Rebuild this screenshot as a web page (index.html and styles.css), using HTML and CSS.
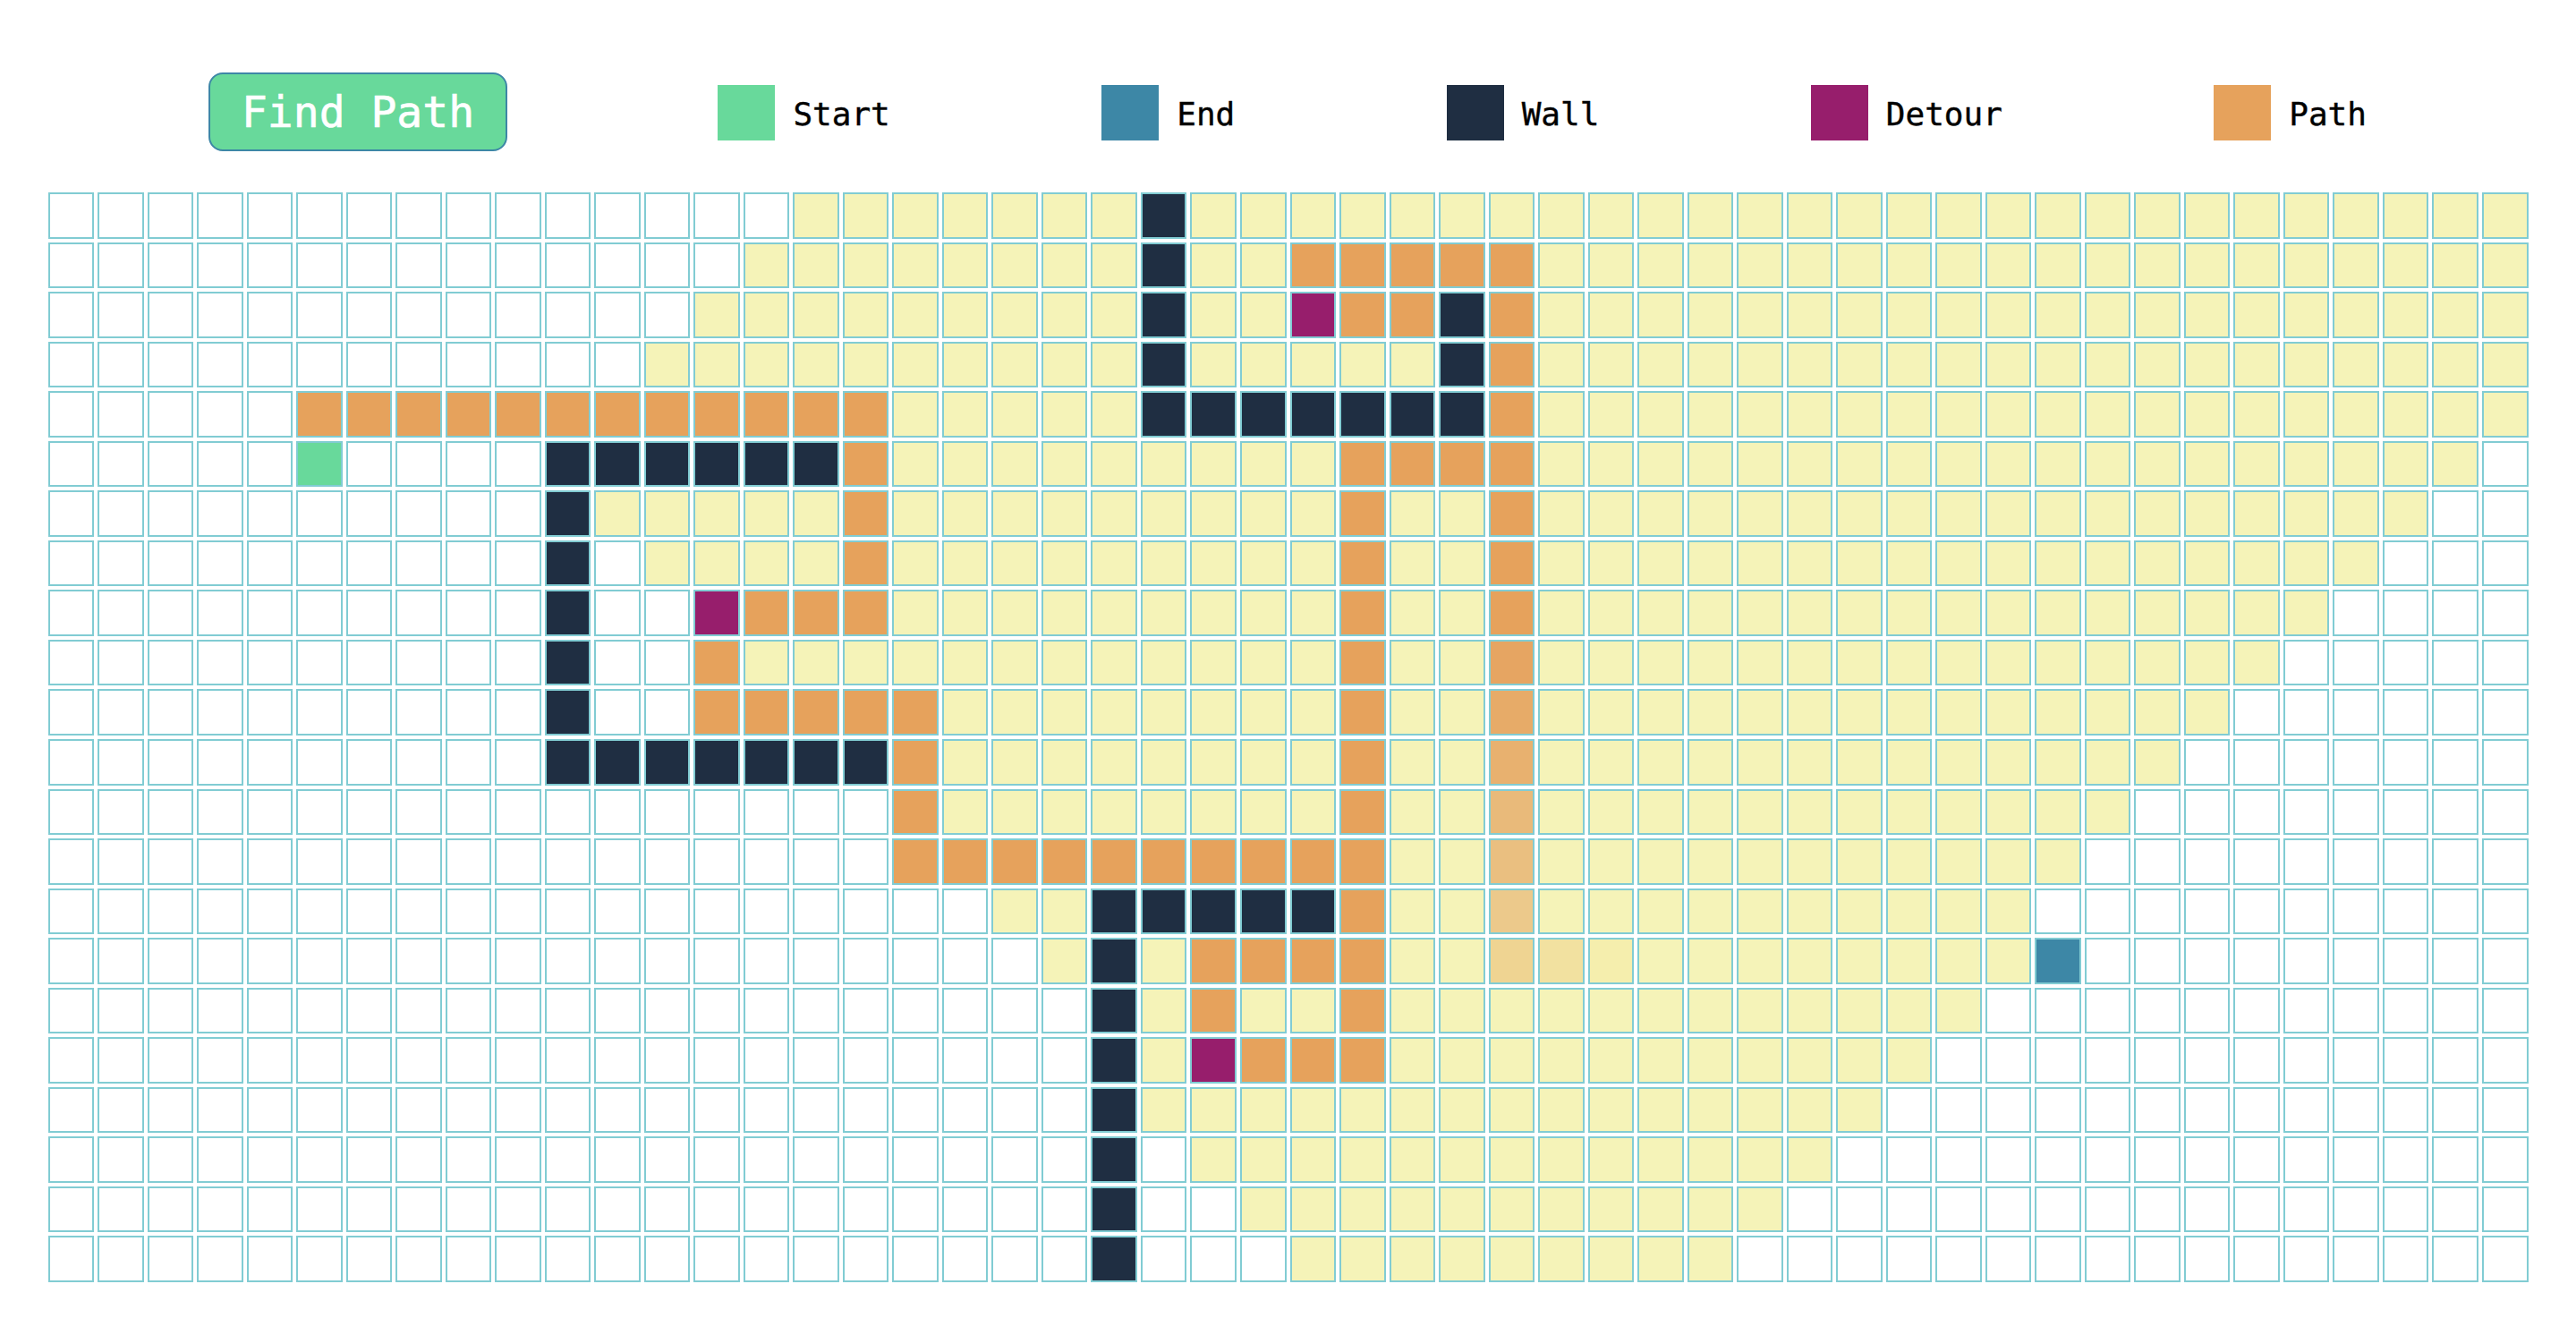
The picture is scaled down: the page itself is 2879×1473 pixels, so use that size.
FILE: index.html
```html
<!DOCTYPE html>
<html lang="en">
<head>
    <meta charset="UTF-8">
    <meta name="viewport" content="width=device-width, initial-scale=1.0">
    <title>Pathfinding Visualizer</title>
    <link rel="stylesheet" href="styles.css">
</head>
<body>

<div class="toolbar">
    <button class="find-btn" type="button">Find Path</button>
    <div class="legend-item"><span class="swatch start"></span><span class="legend-label">Start</span></div>
    <div class="legend-item"><span class="swatch end"></span><span class="legend-label">End</span></div>
    <div class="legend-item"><span class="swatch wall"></span><span class="legend-label">Wall</span></div>
    <div class="legend-item"><span class="swatch detour"></span><span class="legend-label">Detour</span></div>
    <div class="legend-item"><span class="swatch path"></span><span class="legend-label">Path</span></div>
</div>

<div class="grid" id="grid"></div>

<script src="grid.js"></script>

</body>
</html>
```

FILE: styles.css
```css
body {
    margin: 0;
    padding: 0;
    background-color: #fff;
    font-family: 'DejaVu Sans Mono', 'Liberation Mono', monospace;
}

.toolbar {
    display: flex;
    justify-content: space-between;
    align-items: center;
    padding: 81px 234px 0 233px;
    margin-bottom: 46px;
}

.find-btn {
    width: 334px;
    height: 88px;
    margin-right: -1px;
    padding: 0;
    box-sizing: border-box;
    background-color: #68d99b;
    border: 2px solid #3d87a6;
    border-radius: 16px;
    color: #fff;
    font-family: inherit;
    font-size: 48px;
    -webkit-text-stroke: 0.6px #fff;
}

.legend-item {
    display: flex;
    align-items: center;
    gap: 20px;
    margin-top: 2px;
    font-size: 36px;
    color: #000;
}

.legend-label {
    padding-top: 3px;
    -webkit-text-stroke: 0.4px #000;
}

.swatch {
    display: block;
    width: 64px;
    height: 62px;
}

.grid {
    display: grid;
    grid-template-columns: repeat(50, 1fr);
    grid-template-rows: repeat(22, 1fr);
    gap: 4px;
    width: 2772px;
    height: 1218px;
    margin: 0 auto;
}

.cell {
    box-sizing: border-box;
    border: 2px solid #81ccd3;
    background-color: #fff;
}

.start { background-color: #68d99b; }
.end { background-color: #3d87a6; }
.wall { background-color: #1f2e42; }
.detour { background-color: #971e6c; }
.path { background-color: #e6a25c; }
.visited { background-color: #f5f3b8; }

/* path cells still fading in from the yellow */
.fade1 { background-color: #e6a562; }
.fade2 { background-color: #e7ab68; }
.fade3 { background-color: #e8b16f; }
.fade4 { background-color: #e9ba7a; }
.fade5 { background-color: #eabf80; }
.fade6 { background-color: #ecc98b; }
.fade7 { background-color: #efd492; }
.fade8 { background-color: #f2e1a0; }
.fade9 { background-color: #f5eead; }
```

FILE: grid.js
```js
// run-length rows: 5v = five visited cells, a bare letter = one cell
const rows = [
    '15. 7v w 27v',
    '14. 8v w 2v 5p 20v',
    '13. 9v w 2v d 2p w p 20v',
    '12. 10v w 5v w p 20v',
    '5. 12p 5v 7w p 20v',
    '5. s 4. 6w p 9v 4p 19v .',
    '10. w 5v p 9v p 2v p 18v 2.',
    '10. w . 4v p 9v p 2v p 17v 3.',
    '10. w 2. d 3p 9v p 2v p 16v 4.',
    '10. w 2. p 12v p 2v A 15v 5.',
    '10. w 2. 5p 8v p 2v B 14v 6.',
    '10. 7w p 8v p 2v C 13v 7.',
    '17. p 8v p 2v D 12v 8.',
    '17. 10p 2v E 11v 9.',
    '19. 2v 5w p 2v F 10v 10.',
    '20. v w v 4p 2v G H I 8v e 9.',
    '21. w v p 2v p 12v 11.',
    '21. w v d 3p 11v 12.',
    '21. w 15v 13.',
    '21. w . 13v 14.',
    '21. w 2. 11v 15.',
    '21. w 3. 9v 16.'
];

const classes = {
    '.': '', v: 'visited', w: 'wall', p: 'path', d: 'detour', s: 'start', e: 'end',
    A: 'fade1', B: 'fade2', C: 'fade3', D: 'fade4', E: 'fade5',
    F: 'fade6', G: 'fade7', H: 'fade8', I: 'fade9'
};

const grid = document.getElementById('grid');

for (const row of rows) {
    for (const run of row.split(' ')) {
        const count = parseInt(run) || 1;
        const type = run[run.length - 1];

        for (let i = 0; i < count; i++) {
            const cell = document.createElement('div');
            cell.className = ('cell ' + classes[type]).trim();
            grid.appendChild(cell);
        }
    }
}
```
